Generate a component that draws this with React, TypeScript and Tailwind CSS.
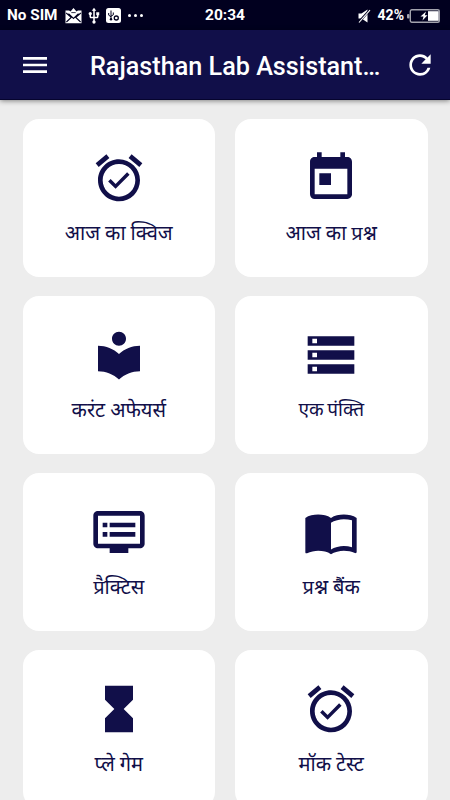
import type { IconType } from 'react-icons';
import {
  MdAlarmOn,
  MdDvr,
  MdHourglassFull,
  MdImportContacts,
  MdLocalLibrary,
  MdMenu,
  MdRefresh,
  MdStorage,
  MdToday,
  MdUsb,
} from 'react-icons/md';

const tiles: { label: string; icon: IconType; labelClass?: string }[] = [
  { label: 'आज का क्विज', icon: MdAlarmOn },
  { label: 'आज का प्रश्न', icon: MdToday },
  { label: 'करंट अफेयर्स', icon: MdLocalLibrary },
  { label: 'एक पंक्ति', icon: MdStorage, labelClass: 'text-[19px] [word-spacing:-1px]' },
  { label: 'प्रैक्टिस', icon: MdDvr },
  { label: 'प्रश्न बैंक', icon: MdImportContacts },
  { label: 'प्ले गेम', icon: MdHourglassFull },
  { label: 'मॉक टेस्ट', icon: MdAlarmOn },
];

function MailIcon() {
  return (
    <svg className="ml-[7px] h-[16px] w-[17px]" viewBox="0 0 17 16">
      <path d="M.5 2.5h3.6l1.4 1L8.5 0l3 3.5 1.4-1h3.6v12.7H.5z" fill="#fff" />
      <path d="M1.2 5l5 4.4L1.4 14M15.8 5l-5 4.4 4.8 4.6M3.5 5.6l5 4.8 5-4.8" fill="none" stroke="#01001f" strokeWidth="1.1" />
      <path d="M6.3 4.6h4.4" stroke="#01001f" strokeWidth=".8" />
    </svg>
  );
}

function UsbBoxIcon() {
  return (
    <svg className="ml-[3px] h-[15px] w-[15px]" viewBox="0 0 15 15">
      <rect width="15" height="15" rx="2.5" fill="#fff" />
      <g fill="none" stroke="#01001f">
        <path d="M5 2.5v8.7M2.7 5v2.2L5 8.8M7.3 4.5v2.3L5 8.2" />
        <circle cx="10.3" cy="10" r="2" strokeWidth="1.3" />
      </g>
      <circle cx="5" cy="11.3" r="1.2" fill="#01001f" />
    </svg>
  );
}

function MutedIcon() {
  return (
    <svg className="h-[14px] w-[13px]" viewBox="0 0 13 14">
      <path d="M.5 4.5h3L9.5.5v13l-6-4h-3z" fill="#fff" />
      <path d="M.5 13.5L12 .8" stroke="#01001f" strokeWidth="2.4" />
      <path d="M1 13.5L12 1.2" stroke="#fff" strokeWidth="1.1" />
    </svg>
  );
}

function BatteryIcon() {
  return (
    <svg className="ml-[3px] h-[14px] w-[33px]" viewBox="0 0 33 14">
      <rect x="0" y="5" width="2.5" height="4.5" rx="1" fill="#a3a3ad" />
      <rect x="3.3" y=".8" width="29" height="12.4" rx="1.5" fill="none" stroke="#a3a3ad" strokeWidth="1.4" />
      <rect x="21" y="2.2" width="10.6" height="9.6" fill="#fff" />
      <path d="M19 2.5l-5.5 5h3l-1 4 5-5.2h-2.7z" fill="#fff" />
    </svg>
  );
}

function StatusBar() {
  return (
    <div className="grid h-[30px] shrink-0 grid-cols-[1fr_auto_1fr] items-center bg-[#01001f] pt-[1px] text-[15px] font-bold text-white">
      <div className="flex items-center pl-[7px]">
        <span className="w-[51px] text-[15.3px] whitespace-nowrap">No SIM</span>
        <MailIcon />
        <MdUsb className="ml-[2.5px] h-[18px] w-[18px]" />
        <UsbBoxIcon />
        <div className="ml-[7px] flex gap-[3px]">
          <i className="size-[3px] rounded-full bg-white" />
          <i className="size-[3px] rounded-full bg-white" />
          <i className="size-[3px] rounded-full bg-white" />
        </div>
      </div>
      <span className="text-[15.5px]">20:34</span>
      <div className="flex items-center justify-end pr-[10px]">
        <MutedIcon />
        <span className="ml-[7px] text-[14px]">42%</span>
        <BatteryIcon />
      </div>
    </div>
  );
}

function AppBar() {
  return (
    <header className="flex h-[70px] shrink-0 items-center border-b border-[#06042e] bg-[#110f49] pr-[14px] pl-[19px] text-white shadow-[0_1px_5px_rgba(0,0,0,0.45)]">
      <button aria-label="Menu">
        <MdMenu className="size-8" />
      </button>
      <h1 className="ml-[39px] flex-1 pt-[4px] text-[25.2px] font-medium whitespace-nowrap">Rajasthan Lab Assistant…</h1>
      <button aria-label="Refresh">
        <MdRefresh className="size-8" />
      </button>
    </header>
  );
}

export default function App() {
  return (
    <div className="flex h-[800px] w-[450px] flex-col overflow-hidden bg-[#ededed] font-[Roboto,'Noto_Sans',sans-serif]">
      <StatusBar />
      <AppBar />
      <main className="grid grid-cols-2 gap-x-5 gap-y-[19px] px-[22.5px] pt-[19px]">
        {tiles.map(({ label, icon: Icon, labelClass = 'text-[20px]' }) => (
          <button
            key={label}
            className="flex h-[158px] flex-col items-center rounded-[16px] bg-white pt-[31px] text-[#110f49]"
          >
            <Icon className="size-14 shrink-0" />
            <span className={`mt-[12px] leading-[30px] whitespace-nowrap ${labelClass}`}>{label}</span>
          </button>
        ))}
      </main>
    </div>
  );
}
